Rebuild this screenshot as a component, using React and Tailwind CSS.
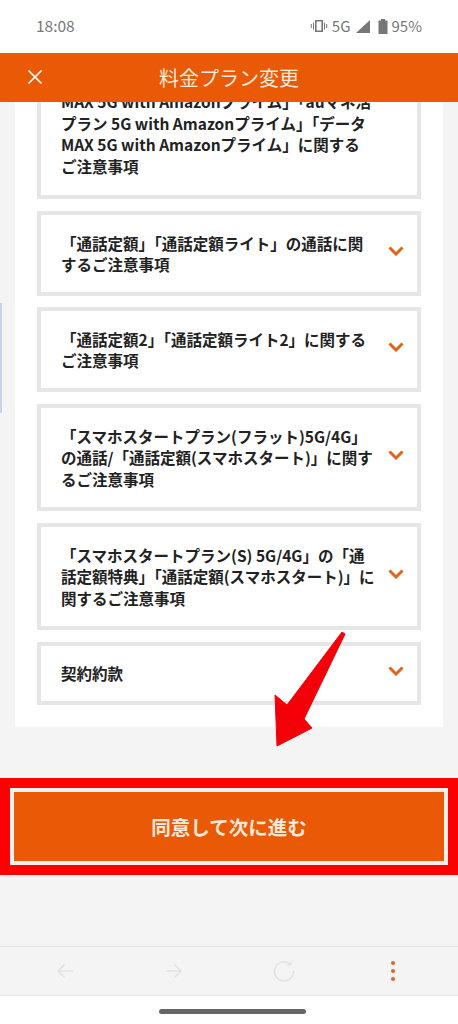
import React from 'react';
import { X } from 'lucide-react';

const items = [
  { lines: ['「通話定額」「通話定額ライト」の通話に関', 'するご注意事項'], h: 'h-[85px] -mb-[1px]' },
  { lines: ['「通話定額2」「通話定額ライト2」に関する', 'ご注意事項'], h: 'h-[85px]' },
  { lines: ['「スマホスタートプラン(フラット)5G/4G」', 'の通話/「通話定額(スマホスタート)」に関す', 'るご注意事項'], h: 'h-[107px]' },
  { lines: ['「スマホスタートプラン(S) 5G/4G」の「通', '話定額特典」「通話定額(スマホスタート)」に', '関するご注意事項'], h: 'h-[107px]' },
  { lines: ['契約約款'], h: 'h-[63px]' },
];

const Chevron = () => (
  <svg width="16" height="10" viewBox="0 0 16 10" fill="none" className="shrink-0 mt-[-6px]">
    <path d="M1.500 1.500 L8 8 L14.500 1.500" stroke="#e0641c" strokeWidth="3" />
  </svg>
);

const AccordionItem = ({ lines, h }) => (
  <div className={`${h} border-[4px] border-[#e6e6e6] bg-white flex items-center justify-between pl-[20px] pr-[13px]`}>
    <p className="text-[15.500px] leading-[21.500px] font-bold text-[#222] whitespace-nowrap pt-[1px]">
      {lines.map((l) => <span key={l} className="block">{l}</span>)}
    </p>
    <Chevron />
  </div>
);

const StatusBar = () => (
  <div className="h-[53px] bg-white flex items-center justify-between pl-[36px] pr-[36px] pb-[1px] text-[#777]">
    <span className="text-[15.500px]">18:08</span>
    <div className="flex items-center text-[15px]">
      <svg width="18" height="14" viewBox="0 0 18 14" fill="#777">
        <path d="M5 1h8v12H5V1zm1.600 1.600v8.800h4.800V2.600H6.600zM3 3.500h1v7H3zM14 3.500h1v7h-1zM.8 5h1v4h-1zM16.200 5h1v4h-1z" fillRule="evenodd" />
      </svg>
      <span className="ml-[4px]">5G</span>
      <svg width="14" height="14" viewBox="0 0 14 14" fill="#777" className="ml-[5px]"><path d="M14 1v13H0z" /></svg>
      <svg width="10" height="15" viewBox="0 0 10 15" fill="#777" className="ml-[8px]"><path d="M3 0h4v1.500h2.500V15H.5V1.500H3z" /></svg>
      <span className="ml-[4px]">95%</span>
    </div>
  </div>
);

const BottomNav = () => (
  <div className="h-[50px] bg-[#f4f4f4] border-y border-[#e4e4e4] grid grid-cols-4 items-center">
    <svg width="18" height="16" viewBox="0 0 18 16" fill="none" stroke="#e2e2e2" strokeWidth="1.600" className="ml-[56px]"><path d="M17 8H2M8.500 1.500 2 8l6.500 6.500" /></svg>
    <svg width="18" height="16" viewBox="0 0 18 16" fill="none" stroke="#e2e2e2" strokeWidth="1.600" className="ml-[50px]"><path d="M1 8h15M9.500 1.500 16 8l-6.500 6.500" /></svg>
    <svg width="22" height="22" viewBox="0 0 22 22" fill="none" stroke="#e2e2e2" strokeWidth="1.600" className="ml-[44px]"><path d="M17.500 4.500A9.500 9.500 0 1 0 20.500 11" /><path d="M13.500 5.500h5v-4.500" fill="#e2e2e2" stroke="none" /></svg>
    <div className="flex flex-col gap-[4px] ml-[47px] pb-[1px]">
      <span className="w-[4px] h-[4px] rounded-full bg-[#d9662a]" />
      <span className="w-[4px] h-[4px] rounded-full bg-[#d9662a]" />
      <span className="w-[4px] h-[4px] rounded-full bg-[#d9662a]" />
    </div>
  </div>
);

export default function App() {
  return (
    <div className="relative w-[458px] h-[1024px] overflow-hidden flex flex-col bg-[#f4f4f4] font-['Noto_Sans_CJK_JP','Noto_Sans',sans-serif]">
      <StatusBar />

      <header className="h-[49px] bg-[#ea5906] flex items-center justify-center relative text-white">
        <X size={24} strokeWidth={1.700} className="absolute left-[23px] top-[12px]" />
        <h1 className="text-[20px] pt-[1px] text-[#fbe9dc]">料金プラン変更</h1>
      </header>

      <main className="flex-1 min-h-0 overflow-hidden flex flex-col">
        <div className="h-[676px] shrink-0 overflow-hidden relative">
          <div className="absolute left-0 top-[201px] w-[2px] h-[110px] bg-[#cdd2e3]" />
          <div className="mx-[15px] h-[625px] bg-white px-[22px] flex flex-col gap-[12px] justify-end pb-[22px]">
            <div className="h-[97px] shrink-0 overflow-hidden border-b-[4px] border-x-[4px] border-[#e6e6e6] relative">
              <p className="absolute left-[20px] bottom-[18px] text-[15.500px] leading-[21.500px] font-bold text-[#222] whitespace-nowrap">
                <span className="block">MAX 5G with Amazonプライム」「auマネ活</span>
                <span className="block">プラン 5G with Amazonプライム」「データ</span>
                <span className="block">MAX 5G with Amazonプライム」に関する</span>
                <span className="block">ご注意事項</span>
              </p>
            </div>
            {items.map((it) => <AccordionItem key={it.lines[0]} {...it} />)}
          </div>
        </div>

        <div className="h-[97px] shrink-0 border-[10px] border-[#fe0000] bg-[#f4f4f4]">
          <div className="h-full border-[4px] border-[#f5f0ec] bg-[#ea5906] flex items-center justify-center">
            <span className="text-[19.500px] font-bold text-[#fbe9dc]">同意して次に進む</span>
          </div>
        </div>
      </main>

      <BottomNav />

      <div className="h-[28px] bg-white flex justify-center pt-[13px] pl-[7px]">
        <div className="w-[147px] h-[5px] rounded-full bg-[#666]" />
      </div>

      <svg width="90" height="150" viewBox="0 0 90 150" className="absolute left-[265px] top-[625px]">
        <path d="M77 7 L80 9 L39 94 L47 103 L12 121 L10 70 L22 80 Z" fill="#f40009" stroke="#f40009" strokeWidth="1" strokeLinejoin="round" />
      </svg>
    </div>
  );
}
